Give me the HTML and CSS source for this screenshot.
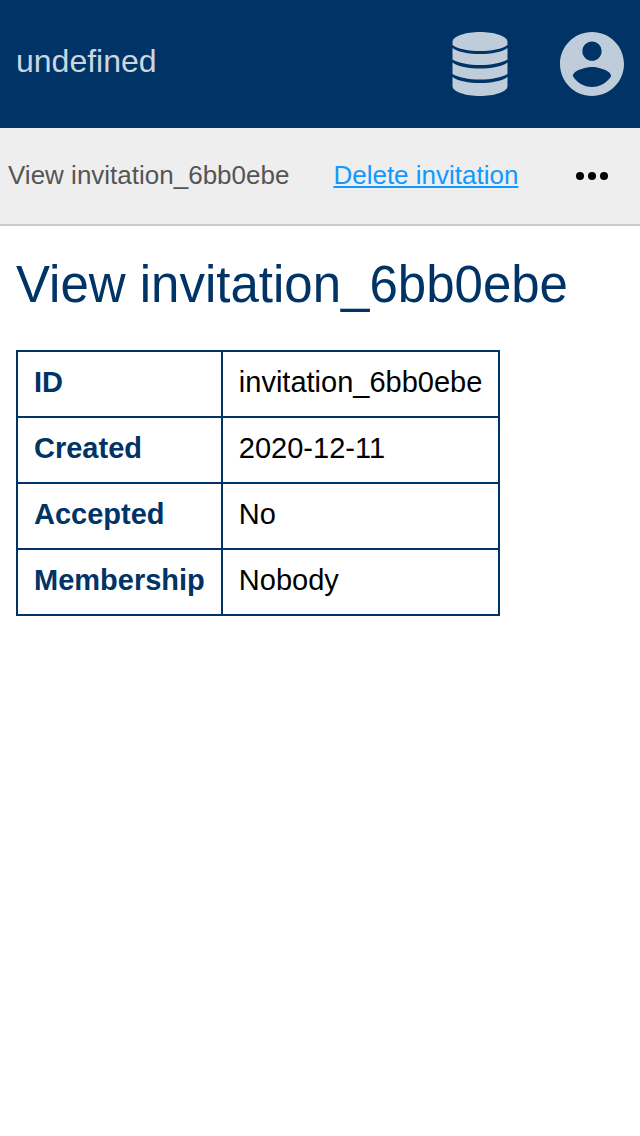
FILE: index.html
```html
<!DOCTYPE html>
<html lang="en">
<head>
<meta charset="utf-8">
<meta name="viewport" content="width=device-width, initial-scale=1">
<title>View invitation_6bb0ebe</title>
<link rel="stylesheet" href="styles.css">
</head>
<body>
<header class="topbar">
  <span class="brand">undefined</span>
  <nav class="top-actions" aria-label="Main">
    <button class="icon-button" type="button" aria-label="Data">
      <svg class="icon" viewBox="0 0 64 64" aria-hidden="true"><path d="M32 0C46 0 59.500 4 59.500 10v3C54 17 43 19 32 19S10 17 4.500 13v-3C4.500 4 18 0 32 0z"/><path d="M4.500 16C10 20 21 22 32 22s22-2 27.500-6v11.500C54 31 43 33 32 33S10 31 4.500 27.500z"/><path d="M4.500 30.500C10 34.500 21 36.500 32 36.500s22-2 27.500-6V42C54 45.500 43 47.500 32 47.500S10 45.500 4.500 42z"/><path d="M4.500 45C10 49 21 51 32 51s22-2 27.500-6v9C59.500 60 46 64 32 64S4.500 60 4.500 54z"/></svg>
    </button>
    <button class="icon-button" type="button" aria-label="Account">
      <svg class="icon" viewBox="2 2 20 20" aria-hidden="true"><path d="M12 2C6.480 2 2 6.480 2 12s4.480 10 10 10 10-4.480 10-10S17.520 2 12 2zm0 3c1.660 0 3 1.340 3 3s-1.340 3-3 3-3-1.340-3-3 1.340-3 3-3zm0 14.200c-2.500 0-4.710-1.280-6-3.420.030-1.790 4-2.880 6-2.880 1.990 0 5.970 1.090 6 2.880-1.290 2.140-3.500 3.420-6 3.420z"/></svg>
    </button>
  </nav>
</header>
<nav class="subbar" aria-label="Page">
  <span class="crumb">View invitation_6bb0ebe</span>
  <a class="action" href="#">Delete invitation</a>
  <button class="more" type="button" aria-label="More">
    <svg class="dots" viewBox="0 0 32 8" aria-hidden="true"><circle cx="4" cy="4" r="4"/><circle cx="16" cy="4" r="4"/><circle cx="28" cy="4" r="4"/></svg>
  </button>
</nav>
<main class="content">
  <h1 class="title">View invitation_6bb0ebe</h1>
  <table class="details">
    <tbody>
      <tr><th scope="row">ID</th><td>invitation_6bb0ebe</td></tr>
      <tr><th scope="row">Created</th><td>2020-12-11</td></tr>
      <tr><th scope="row">Accepted</th><td>No</td></tr>
      <tr><th scope="row">Membership</th><td>Nobody</td></tr>
    </tbody>
  </table>
</main>
</body>
</html>
```
FILE: styles.css
```css
* {
  box-sizing: border-box;
}

body {
  margin: 0;
  background: #fff;
  color: #000;
  font-family: "Liberation Sans", Arial, sans-serif;
  font-size: 29px;
}

.topbar {
  display: flex;
  align-items: center;
  justify-content: space-between;
  padding: 32px 16px;
  background: #036;
}

.brand {
  padding-bottom: 6px;
  color: #ccd6e0;
  font-size: 32px;
  line-height: 40px;
}

.top-actions {
  display: flex;
  gap: 48px;
}

.icon-button,
.more {
  display: block;
  padding: 0;
  border: 0;
  background: none;
  cursor: pointer;
}

.icon {
  display: block;
  width: 64px;
  height: 64px;
  fill: #bfccd9;
}

.subbar {
  display: flex;
  align-items: center;
  padding: 32px 32px 32px 8px;
  border-bottom: 2px solid #ccc;
  background: #eee;
  font-size: 26px;
  line-height: 30px;
}

.crumb,
.action {
  padding-bottom: 2px;
}

.crumb {
  color: #555;
}

.action {
  margin-left: 44px;
  color: #19f;
}

.more {
  margin-left: auto;
}

.dots {
  display: block;
  width: 32px;
  height: 8px;
  fill: #000;
}

.content {
  padding: 27px 16px;
}

.title {
  margin: 0 0 33px;
  color: #036;
  font-size: 51px;
  font-weight: normal;
  line-height: 64px;
}

.details {
  border-collapse: collapse;
  line-height: 32px;
}

.details th,
.details td {
  padding: 14px 16px 18px;
  border: 2px solid #036;
  text-align: left;
}

.details th {
  color: #036;
}
```
